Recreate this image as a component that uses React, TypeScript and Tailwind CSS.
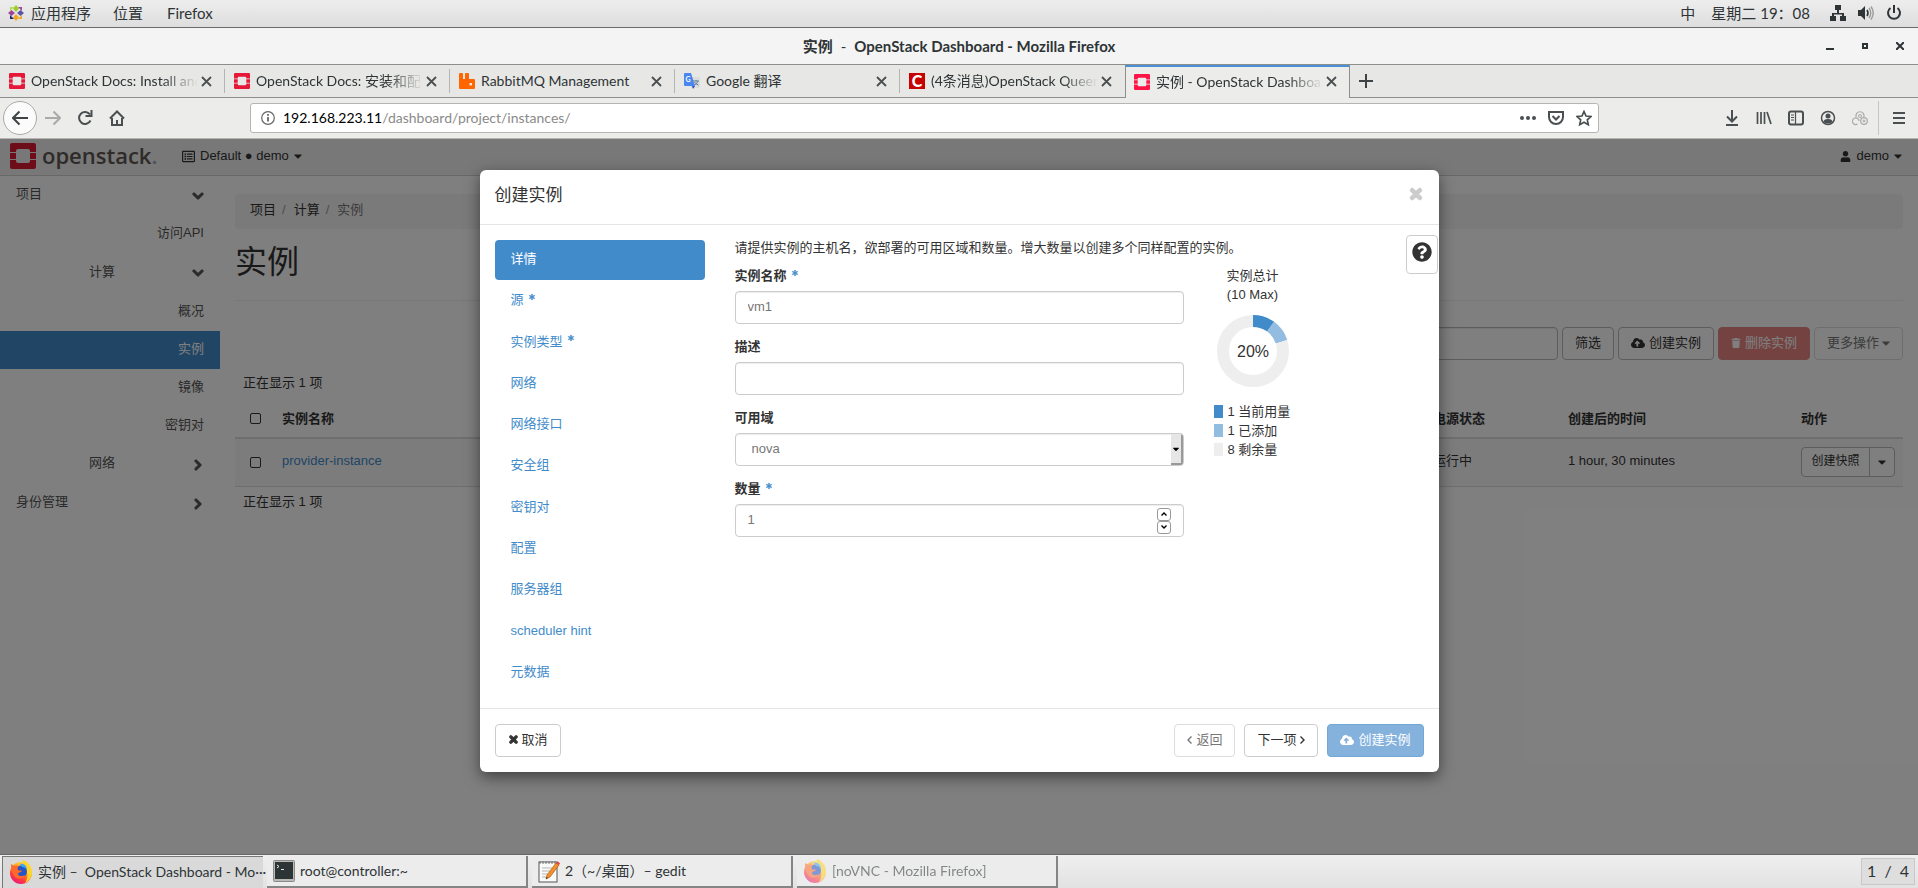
import React from 'react'
import {
    FaAsterisk,
    FaCaretDown,
    FaChevronDown,
    FaChevronRight,
    FaCloudUploadAlt,
    FaQuestionCircle,
    FaRegListAlt,
    FaTimes,
    FaTrash,
    FaUser,
} from 'react-icons/fa'

const WEB_FONT = "font-['Liberation_Sans','Noto_Sans_CJK_SC',sans-serif]"
const SHELL_FONT = "font-['Lato','Noto_Sans_CJK_SC',sans-serif]"

/* ---------- Logos ---------- */

function OpenStackMark({ className }: { className?: string }) {
    return (
        <svg viewBox="0 0 26 26" className={className} fill="currentColor" aria-hidden="true">
            <path d="M0 9V2a2 2 0 0 1 2-2h22a2 2 0 0 1 2 2v7h-6V8a2 2 0 0 0-2-2H8a2 2 0 0 0-2 2v1z" />
            <path d="M0 17v7a2 2 0 0 0 2 2h22a2 2 0 0 0 2-2v-7h-6v1a2 2 0 0 1-2 2H8a2 2 0 0 1-2-2v-1z" />
            <path d="M0 10h6v6H0zM20 10h6v6h-6z" />
        </svg>
    )
}

function RabbitMark() {
    return (
        <svg viewBox="0 0 16 16" className="size-4" aria-hidden="true">
            <path
                d="M0 1a1 1 0 0 1 1-1h2a1 1 0 0 1 1 1v5h2V1a1 1 0 0 1 1-1h2a1 1 0 0 1 1 1v5h5a1 1 0 0 1 1 1v8a1 1 0 0 1-1 1H1a1 1 0 0 1-1-1zM10.500 10v2.500h2.500V10z"
                fill="#ff6600"
                fillRule="evenodd"
            />
        </svg>
    )
}

function CentosMark() {
    return (
        <svg viewBox="0 0 16 16" className="size-4 shrink-0" aria-hidden="true">
            <path d="M8 0l3 3.500L8 7 5 3.500z" fill="#9ccd2a" />
            <path d="M16 8l-3.500 3L9 8l3.500-3z" fill="#5b57a6" />
            <path d="M8 16l-3-3.500L8 9l3 3.500z" fill="#efa724" />
            <path d="M0 8l3.500-3L7 8l-3.500 3z" fill="#a2459a" />
            <path d="M2 2h4L2 6z" fill="#b9d94f" />
            <path d="M14 2v4l-4-4z" fill="#a2459a" />
            <path d="M14 14h-4l4-4z" fill="#efa724" />
            <path d="M2 14v-4l4 4z" fill="#262577" />
        </svg>
    )
}

function TranslateMark() {
    return (
        <svg viewBox="0 0 16 16" className="size-4" aria-hidden="true">
            <rect x="7" y="4" width="9" height="11" rx="1" fill="#dcdcdc" />
            <path d="M9 8h6M12 7v1M14 8q-1 3-4 4M10.500 9q1 2 4 3" stroke="#5f7f8c" fill="none" />
            <path d="M1 0h6l4 13H1a1 1 0 0 1-1-1V1a1 1 0 0 1 1-1z" fill="#4a86f0" />
            <path d="M8 13h3l-2 3z" fill="#2f51b8" />
            <text x="1.500" y="9" fontSize="7" fontWeight="700" fill="#fff">G</text>
        </svg>
    )
}

function CsdnMark() {
    return <span className="grid size-4 place-items-center bg-[#c90000] text-base leading-4 font-black text-white">C</span>
}

function FirefoxMark({ className }: { className?: string }) {
    return (
        <svg viewBox="0 0 24 24" className={className} aria-hidden="true">
            <defs>
                <linearGradient id="fxBody" x1="0.8" y1="0" x2="0.2" y2="1">
                    <stop offset="0" stopColor="#fff14a" />
                    <stop offset="0.4" stopColor="#ff9a1f" />
                    <stop offset="0.7" stopColor="#ff3a3f" />
                    <stop offset="1" stopColor="#e31587" />
                </linearGradient>
            </defs>
            <circle cx="12" cy="13" r="11" fill="url(#fxBody)" />
            <path d="M14 0c4 1 9 6 9 12 0 5-3 9-7 11 4-6 3-12-1-15-2-2-2-5-1-8z" fill="#ffd52e" />
            <circle cx="12" cy="11.500" r="6" fill="#2456c8" />
            <path d="M11 4c4-1 7 2 7 6-1-2-3-3-5-3z" fill="#3fa5f5" />
            <path d="M2 4c2 1 3 2 4 2 2-1 3 0 4 0-1 1-2 2-1 4 1 1 3 0 4 1-1 2-4 1-4 3s4 3 7 1c-1 4-7 5-10 2C3 14 2 9 2 4z" fill="#ff6a2a" />
        </svg>
    )
}

function TerminalMark() {
    return (
        <svg viewBox="0 0 22 22" className="size-[22px] shrink-0" aria-hidden="true">
            <rect x="0.500" y="0.500" width="21" height="21" rx="1" fill="#b9bab6" stroke="#8a8a8a" />
            <rect x="2" y="2" width="18" height="17" fill="#2c3436" />
            <path d="M4 5l2 1.500L4 8M8 9.500h3" stroke="#e8e8e8" fill="none" />
        </svg>
    )
}

function GeditMark() {
    return (
        <svg viewBox="0 0 22 24" className="h-6 w-[22px] shrink-0" aria-hidden="true">
            <rect x="1" y="3" width="18" height="20" fill="#fafafa" stroke="#555" />
            <path d="M2 2v3M5 2v3M8 2v3M11 2v3M14 2v3M17 2v3" stroke="#777" />
            <path d="M4 9h10M4 12h8M4 15h6M4 18h4" stroke="#b5b5b5" />
            <path d="M18 4l3 2-9 12-4 2 1-4z" fill="#f58f28" stroke="#a85b16" strokeWidth="0.700" />
            <path d="M18 4l1-1.500q2 0 3 2L21 6z" fill="#e0474c" />
            <path d="M8 20l.5-2 1.500 1z" fill="#333" />
        </svg>
    )
}

/* ---------- Desktop shell ---------- */

function TopBar() {
    return (
        <header className="flex h-7 items-center border-b border-[#6a6a6a] bg-linear-to-b from-[#ededed] to-[#dedede] pr-4 pb-[2px] pl-2 text-[15px] leading-5 text-[#2e3436]">
            <CentosMark />
            <button className="ml-[7px]">应用程序</button>
            <button className="ml-[22px]">位置</button>
            <button className="ml-6">Firefox</button>
            <span className="ml-auto">中</span>
            <span className="ml-4">星期二 19：08</span>
            <div className="ml-5 flex items-center gap-3">
                <svg viewBox="0 0 16 16" className="size-4" fill="currentColor" aria-hidden="true">
                    <path d="M5 0h6v5H9v3h5v3h2v5h-6v-5h2V9.500H4V11h2v5H0v-5h2V8h5V5H5z" />
                </svg>
                <svg viewBox="0 0 16 16" className="size-4" fill="none" stroke="currentColor" aria-hidden="true">
                    <path d="M0 5h3l4-4v14l-4-4H0z" fill="currentColor" stroke="none" />
                    <path d="M9 5q2 3 0 6" strokeWidth="1.600" />
                    <path d="M11 3q3.500 5 0 10M13 1.500q4.500 6.500 0 13" stroke="#9a9c9c" strokeWidth="1.400" />
                </svg>
                <svg viewBox="0 0 16 16" className="size-4" fill="none" stroke="currentColor" strokeWidth="2" aria-hidden="true">
                    <path d="M4.500 3a6 6 0 1 0 7 0M8 0v8" />
                </svg>
            </div>
        </header>
    )
}

function TitleBar() {
    return (
        <div className="grid h-[37px] grid-cols-[1fr_auto_1fr] items-center border-b border-[#8e8f8b] bg-[#f4f4f4] pb-px text-[#2e3436]">
            <span />
            <h1 className="text-[15px] leading-5 font-bold">
                实例
                <span className="mx-2 font-normal">-</span>
                OpenStack Dashboard - Mozilla Firefox
            </h1>
            <div className="flex items-center justify-end gap-[27px] pr-[14px]">
                <button aria-label="最小化">
                    <svg viewBox="0 0 8 8" className="size-2" aria-hidden="true"><path d="M0 7h8" stroke="currentColor" strokeWidth="2" /></svg>
                </button>
                <button aria-label="最大化">
                    <svg viewBox="0 0 8 8" className="size-2" aria-hidden="true"><path d="M2 2h4v4H2z" fill="none" stroke="currentColor" strokeWidth="2" /></svg>
                </button>
                <button aria-label="关闭">
                    <svg viewBox="0 0 8 8" className="size-2" aria-hidden="true"><path d="M0 0l8 8M8 0L0 8" stroke="currentColor" strokeWidth="2" /></svg>
                </button>
            </div>
        </div>
    )
}

const tabs = [
    { title: 'OpenStack Docs: Install and', icon: <OpenStackMark className="size-4 text-[#e61739]" /> },
    { title: 'OpenStack Docs: 安装和配', icon: <OpenStackMark className="size-4 text-[#e61739]" /> },
    { title: 'RabbitMQ Management', icon: <RabbitMark /> },
    { title: 'Google 翻译', icon: <TranslateMark /> },
    { title: '(4条消息)OpenStack Queen', icon: <CsdnMark /> },
    { title: '实例 - OpenStack Dashboard', icon: <OpenStackMark className="size-4 text-[#ff1447]" />, active: true },
]

function TabStrip() {
    return (
        <div className="flex h-[33px] bg-[#e7e7e5] text-sm leading-5 text-[#2e3436]">
            {tabs.map((tab, i) => (
                <div
                    key={i}
                    className={
                        tab.active
                            ? 'flex w-[225px] items-center border-x border-t-2 border-x-[#8e8f8b] border-t-[#4a90d9] bg-[#ececea] pb-[2px] pl-2'
                            : 'flex w-[225px] items-center border-b border-[#8e8f8b] pl-[9px]'
                    }
                >
                    <span className="shrink-0">{tab.icon}</span>
                    <span className={`ml-[6px] w-[167px] overflow-hidden whitespace-nowrap ${i === 2 || i === 3 ? '' : '[mask-image:linear-gradient(to_right,black_calc(100%-36px),transparent)]'}`}>
                        {tab.title}
                    </span>
                    <button aria-label="关闭标签页" className="ml-[3px]">
                        <svg viewBox="0 0 11 11" className="size-[11px]" aria-hidden="true"><path d="M1 1l9 9M10 1l-9 9" stroke="#4a4f51" strokeWidth="1.800" /></svg>
                    </button>
                    {!tab.active && i !== 4 && <span className="ml-auto h-6 w-px bg-[#b4b4b2]" />}
                </div>
            ))}
            <div className="flex flex-1 items-center border-b border-[#8e8f8b] pl-[9px]">
                <button aria-label="新建标签页">
                    <svg viewBox="0 0 14 14" className="size-[14px]" aria-hidden="true"><path d="M7 0v14M0 7h14" stroke="#3e4446" strokeWidth="2" /></svg>
                </button>
            </div>
        </div>
    )
}

function NavIcon({ label, children, muted }: { label: string, children: React.ReactNode, muted?: boolean }) {
    return (
        <button aria-label={label} className={muted ? 'text-[#a9aaa9]' : 'text-[#4a4f51]'}>
            <svg viewBox="0 0 16 16" className="size-4" fill="none" stroke="currentColor" strokeWidth="2" aria-hidden="true">
                {children}
            </svg>
        </button>
    )
}

function Toolbar() {
    return (
        <div className="flex h-[41px] items-center border-b border-[#b4b4b0] bg-[#ececea] pr-[11px] pl-[3px]">
            <button aria-label="后退" className="grid size-[34px] place-items-center rounded-full border border-[#a9a9a7] bg-[#fbfbfb] text-[#3e4446]">
                <svg viewBox="0 0 16 16" className="size-4" fill="none" stroke="currentColor" strokeWidth="2" aria-hidden="true">
                    <path d="M16 8H1M7.500 1.500L1 8l6.500 6.500" />
                </svg>
            </button>
            <div className="ml-2 flex items-center gap-4">
                <NavIcon label="前进" muted><path d="M0 8h15M8.500 1.500L15 8l-6.500 6.500" /></NavIcon>
                <NavIcon label="刷新"><path d="M13.500 10.500a6 6 0 1 1-.500-6M14.500 0v6H8.500" /></NavIcon>
                <NavIcon label="主页"><path d="M1 8.500L8 1.500l7 7M3 8v7h10V8M8 15v-5" /></NavIcon>
            </div>
            <div className="ml-[125px] flex h-[30px] flex-1 items-center rounded-[3px] border border-[#b6b6b0] bg-white pr-[6px] pl-[10px] text-sm">
                <svg viewBox="0 0 14 14" className="size-[14px]" fill="none" stroke="#666" aria-hidden="true">
                    <circle cx="7" cy="7" r="6.300" strokeWidth="1.200" />
                    <path d="M7 6v4.500M7 3v1.700" strokeWidth="1.800" />
                </svg>
                <p className="ml-2 flex-1 text-[#8a8a8a]">
                    <span className="text-black">192.168.223.11</span>/dashboard/project/instances/
                </p>
                <div className="flex items-center gap-3">
                    <NavIcon label="页面操作">
                        <g fill="currentColor" stroke="none"><circle cx="2" cy="8" r="2" /><circle cx="8" cy="8" r="2" /><circle cx="14" cy="8" r="2" /></g>
                    </NavIcon>
                    <NavIcon label="保存到 Pocket"><path d="M1 2h14v5a7 7 0 0 1-14 0zM4.500 6L8 9.500 11.500 6" /></NavIcon>
                    <NavIcon label="收藏"><path d="M8 1.500l2 4.500 5 .5-3.700 3.300 1 4.900L8 12.200l-4.300 2.500 1-4.900L1 6.500 6 6z" strokeWidth="1.700" /></NavIcon>
                </div>
            </div>
            <div className="ml-[125px] flex items-center gap-4">
                <NavIcon label="下载"><path d="M8 0v11M3 6.500l5 5 5-5M2 15h12" /></NavIcon>
                <NavIcon label="书库"><path d="M1.500 2v12M5 2v12M8.500 2v12M11 2l4 12" strokeWidth="1.700" /></NavIcon>
                <NavIcon label="侧栏"><rect x="1" y="1.500" width="14" height="13" rx="2" /><path d="M7.500 2v12" strokeWidth="1.200" /><path d="M3 5h3M3 7.500h3M3 10h3" strokeWidth="1" /></NavIcon>
                <NavIcon label="账户"><circle cx="8" cy="8" r="6.500" strokeWidth="1.500" /><circle cx="8" cy="6" r="2.500" fill="currentColor" stroke="none" /><path d="M3.500 12q0-3 4.500-3t4.500 3q-4.500 3-9 0z" fill="currentColor" stroke="none" /></NavIcon>
                <NavIcon label="同步" muted>
                    <circle cx="8" cy="6" r="1.500" strokeWidth="1" />
                    <path d="M4.200 7a4 4 0 1 1 7.600 0M5.500 14a3.300 3.300 0 1 1 1.500-3" strokeWidth="1.200" />
                    <circle cx="12" cy="11" r="3.300" strokeWidth="1.200" />
                    <circle cx="12" cy="11" r="1" strokeWidth="1" />
                </NavIcon>
            </div>
            <span className="ml-[10px] h-[34px] w-px bg-[#c6c6c4]" />
            <div className="ml-3 flex">
                <NavIcon label="菜单"><path d="M2 3h12M2 8h12M2 13h12" /></NavIcon>
            </div>
        </div>
    )
}

const tasks = [
    { title: '实例 –  OpenStack Dashboard - Mo···', icon: <FirefoxMark className="size-6 shrink-0" />, state: 'active' },
    { title: 'root@controller:~', icon: <TerminalMark />, state: 'open' },
    { title: '2（~/桌面）– gedit', icon: <GeditMark />, state: 'open' },
    { title: '[noVNC - Mozilla Firefox]', icon: <FirefoxMark className="size-6 shrink-0" />, state: 'minimized' },
]

const taskStyles: Record<string, string> = {
    active: 'border-t border-l border-[#777] bg-[#d9d9d9]',
    open: 'border-r-2 border-b-2 border-[#858585] bg-[#ececec]',
    minimized: 'border-r-2 border-b-2 border-[#858585] bg-[#ececec] *:opacity-55',
}

function TaskBar() {
    return (
        <footer className="flex h-[34px] items-center gap-1 border-t border-[#666] bg-linear-to-b from-[#efefef] to-[#e2e2e2] pr-[3px] pl-[2px] text-sm leading-5 text-[#2e3436]">
            {tasks.map((task, i) => (
                <button key={i} className={`flex h-8 w-[261px] items-center gap-[5px] pl-[6px] whitespace-pre ${taskStyles[task.state]}`}>
                    {task.icon}
                    <span>{task.title}</span>
                </button>
            ))}
            <span className="ml-auto h-[27px] w-[54px] border border-[#c8c8c8] bg-[#dedede] text-center text-base leading-6 whitespace-pre">1  /  4</span>
        </footer>
    )
}

/* ---------- Horizon dashboard ---------- */

function Caret() {
    return <FaCaretDown className="h-3 w-2" preserveAspectRatio="xMidYMid slice" />
}

function Brand() {
    return (
        <nav className="flex h-[37px] items-center border-b border-[#d0d0d0] bg-[#f0f0f0] pr-4 pb-[2px] pl-[10px] text-[13px] text-[#333]">
            <a href="#" className="flex items-center gap-[6px]">
                <OpenStackMark className="size-[26px] text-[#da1a32]" />
                <span className="w-[113px] pb-[3px] font-['Open_Sans',sans-serif] text-[22px] leading-6 font-semibold text-[#5c5653]">
                    openstack<span className="text-[#a5a5a5]">.</span>
                </span>
            </a>
            <button className="ml-[27px] flex items-center gap-[5px]">
                <FaRegListAlt className="size-[13px]" />
                <span>Default ● demo</span>
                <Caret />
            </button>
            <button className="ml-auto flex items-center gap-[5px]">
                <FaUser className="size-[11px]" />
                <span>demo</span>
                <Caret />
            </button>
        </nav>
    )
}

function SideGroup({ label, open, nested }: { label: string, open?: boolean, nested?: boolean }) {
    return (
        <button className={`flex w-full items-center justify-between pr-4 ${nested ? 'pl-[89px]' : 'pl-4'} ${nested && open ? 'h-10' : 'h-[39px]'}`}>
            <span className="pb-[3px]">{label}</span>
            {open
                ? <FaChevronDown className="size-3 overflow-visible" strokeWidth={50} />
                : <FaChevronRight className="size-3 overflow-visible" strokeWidth={50} />}
        </button>
    )
}

function SideLink({ label, active }: { label: string, active?: boolean }) {
    return (
        <a
            href="#"
            className={`flex h-[38px] items-center justify-end pr-4 pb-[2px] ${active ? 'bg-[#428bca] text-white' : ''}`}
        >
            {label}
        </a>
    )
}

function Sidebar() {
    return (
        <aside className="w-[220px] shrink-0 text-[13px] leading-5 text-[#555]">
            <SideGroup label="项目" open />
            <SideLink label="访问API" />
            <SideGroup label="计算" open nested />
            <SideLink label="概况" />
            <SideLink label="实例" active />
            <SideLink label="镜像" />
            <SideLink label="密钥对" />
            <SideGroup label="网络" nested />
            <SideGroup label="身份管理" />
        </aside>
    )
}

function InstancesPage() {
    return (
        <main className="min-w-0 flex-1 px-[15px] pt-[18px] text-[13px] leading-5 text-[#333]">
            <ol className="flex h-[35px] items-center rounded bg-[#f5f5f5] px-[15px] pb-1">
                <li><a href="#">项目</a></li>
                <li className="pr-2 pl-[6px] text-[#999]">/</li>
                <li><a href="#">计算</a></li>
                <li className="pr-2 pl-[6px] text-[#999]">/</li>
                <li className="text-[#777]">实例</li>
            </ol>
            <h1 className="border-b border-[#eee] pt-[10px] pb-[15px] text-[32px] leading-[46px]">实例</h1>
            <div className="mt-[26px] flex h-[33px] justify-end gap-1">
                <input aria-label="筛选条件" className="w-[360px] rounded border border-[#bbb] bg-white px-3 shadow-[inset_0_1px_1px_rgba(0,0,0,0.075)]" />
                <button className="rounded border border-[#bbb] bg-white px-3 pb-[2px]">筛选</button>
                <button className="flex items-center gap-1 rounded border border-[#bbb] bg-white px-3 pb-[2px]"><FaCloudUploadAlt className="size-[14px]" />创建实例</button>
                <button className="flex items-center gap-1 rounded border border-[#e08a87] bg-[#e88783] px-3 pb-[2px] text-white"><FaTrash className="size-[10px]" />删除实例</button>
                <button className="flex items-center gap-[3px] rounded border border-[#ddd] bg-white px-3 pb-[2px] text-[#777]">更多操作<Caret /></button>
            </div>
            <p className="mt-[13px] px-2">正在显示 1 项</p>
            <table className="mt-[7px] w-full table-fixed text-left">
                <colgroup>
                    <col className="w-[39px]" />
                    <col />
                    <col className="w-[135px]" />
                    <col className="w-[233px]" />
                    <col className="w-[110px]" />
                </colgroup>
                <thead>
                    <tr className="h-[38px] border-b-2 border-[#ddd]">
                        <th className="pl-[15px]"><input type="checkbox" aria-label="全选" className="block size-[11px] appearance-none rounded-[2px] border border-[#333]" /></th>
                        <th className="px-2">实例名称</th>
                        <th className="px-2">电源状态</th>
                        <th className="px-2">创建后的时间</th>
                        <th className="px-2">动作</th>
                    </tr>
                </thead>
                <tbody>
                    <tr className="h-12 border-b border-[#ddd] bg-[#f9f9f9]">
                        <td className="pl-[15px]"><input type="checkbox" aria-label="选择 provider-instance" className="block size-[11px] appearance-none rounded-[2px] border border-[#333]" /></td>
                        <td className="px-2 pb-[2px]"><a href="#" className="text-[#428bca]">provider-instance</a></td>
                        <td className="px-2 pb-[2px]">运行中</td>
                        <td className="px-2 pb-[2px]">1 hour, 30 minutes</td>
                        <td className="px-2">
                            <div className="flex h-[30px] rounded border border-[#bbb] bg-white text-xs">
                                <button className="flex-1 pb-[2px]">创建快照</button>
                                <button aria-label="更多动作" className="grid w-[25px] place-items-center border-l border-[#bbb]"><Caret /></button>
                            </div>
                        </td>
                    </tr>
                </tbody>
            </table>
            <p className="mt-[5px] px-2">正在显示 1 项</p>
        </main>
    )
}

/* ---------- Launch instance dialog ---------- */

const steps = [
    { label: '详情', active: true },
    { label: '源', required: true },
    { label: '实例类型', required: true },
    { label: '网络' },
    { label: '网络接口' },
    { label: '安全组' },
    { label: '密钥对' },
    { label: '配置' },
    { label: '服务器组' },
    { label: 'scheduler hint' },
    { label: '元数据' },
]

const quota = [
    { value: 1, label: '当前用量', swatch: 'bg-[#428bca]', stroke: '#428bca' },
    { value: 1, label: '已添加', swatch: 'bg-[#92bce0]', stroke: '#92bce0' },
    { value: 8, label: '剩余量', swatch: 'bg-[#eeeeee]', stroke: '#eeeeee' },
]

function Required() {
    return <FaAsterisk className="mb-2 ml-[5px] inline size-[6px] overflow-visible text-[#428bca]" strokeWidth={40} />
}

function Field({ id, label, required, children }: { id: string, label: string, required?: boolean, children: React.ReactNode }) {
    return (
        <div className="mb-[13px]">
            <label htmlFor={id} className="mb-[6px] block h-[19px] leading-[19px] font-bold">
                {label}
                {required && <Required />}
            </label>
            {children}
        </div>
    )
}

function QuotaChart() {
    const total = quota.reduce((sum, q) => sum + q.value, 0)
    let offset = 0
    return (
        <svg viewBox="0 0 72 72" className="mx-auto mt-[11px] size-[72px]" role="img" aria-label="20%">
            <g transform="rotate(-90 36 36)" fill="none" strokeWidth="12">
                {quota.map((q) => {
                    const start = offset
                    offset += (q.value / total) * 100
                    return (
                        <circle
                            key={q.label}
                            cx="36"
                            cy="36"
                            r="30"
                            pathLength={100}
                            stroke={q.stroke}
                            strokeDasharray={`${(q.value / total) * 100} 100`}
                            strokeDashoffset={-start}
                        />
                    )
                })}
            </g>
            <text x="36" y="42" textAnchor="middle" fontSize="16" fill="#333">20%</text>
        </svg>
    )
}

function LaunchDialog() {
    const control = 'h-[33px] w-full rounded border border-[#ccc] bg-white text-[13px] text-[#777] shadow-[inset_0_1px_1px_rgba(0,0,0,0.075)]'

    return (
        <div role="dialog" aria-label="创建实例" className="mt-[31px] w-1/2 min-w-[800px] self-start rounded-md bg-white text-[13px] leading-5 text-[#333] shadow-[0_5px_15px_rgba(0,0,0,0.5)]">
            <div className="flex h-[55px] items-start justify-between border-b border-[#e5e5e5] px-[15px] pt-[14px]">
                <h2 className="text-[17px] leading-6">创建实例</h2>
                <button aria-label="关闭" className="mt-[2px] text-[#ccc]"><FaTimes className="size-4 overflow-visible" strokeWidth={50} /></button>
            </div>

            <div className="flex items-start pt-[10px] pr-px pb-[15px] pl-[15px]">
                <ul className="mt-[5px] flex h-[453px] w-[210px] shrink-0 flex-col justify-between">
                    {steps.map((step) => (
                        <li key={step.label}>
                            <a
                                href="#"
                                className={`block h-10 rounded px-4 pt-[9px] ${step.active ? 'bg-[#428bca] text-white' : 'text-[#428bca]'}`}
                            >
                                {step.label}
                                {step.required && <Required />}
                            </a>
                        </li>
                    ))}
                </ul>

                <div className="ml-[30px] min-w-0 flex-1">
                    <p className="mt-[3px] leading-5">请提供实例的主机名，欲部署的可用区域和数量。增大数量以创建多个同样配置的实例。</p>
                    <div className="mt-[8px] flex gap-[30px]">
                        <div className="min-w-0 flex-1">
                            <Field id="name" label="实例名称" required>
                                <input id="name" defaultValue="vm1" className={`${control} px-3 pb-[2px]`} />
                            </Field>
                            <Field id="description" label="描述">
                                <input id="description" className={`${control} px-3`} />
                            </Field>
                            <Field id="zone" label="可用域">
                                <div className={`${control} flex overflow-hidden`}>
                                    <select id="zone" className="flex-1 appearance-none pb-[2px] pl-4">
                                        <option>nova</option>
                                    </select>
                                    <span className="grid w-3 place-items-center border-r-2 border-b-2 border-[#999] bg-[#e6e6e6] text-black">
                                        <FaCaretDown className="size-[10px]" />
                                    </span>
                                </div>
                            </Field>
                            <Field id="count" label="数量" required>
                                <div className={`${control} flex items-center px-3`}>
                                    <input id="count" type="number" defaultValue={1} className="min-w-0 flex-1 [appearance:textfield] pb-[2px] [&::-webkit-inner-spin-button]:appearance-none" />
                                    <div className="flex flex-col text-black">
                                        <button aria-label="增加" className="grid h-[13px] w-[14px] place-items-center rounded-[3px] border border-[#999]">
                                            <svg viewBox="0 0 6 4" className="h-1 w-[6px]" aria-hidden="true"><path d="M0.500 3.500L3 1l2.500 2.500" fill="none" stroke="currentColor" strokeWidth="1.400" /></svg>
                                        </button>
                                        <button aria-label="减少" className="grid h-[13px] w-[14px] place-items-center rounded-[3px] border border-[#999]">
                                            <svg viewBox="0 0 6 4" className="h-1 w-[6px]" aria-hidden="true"><path d="M0.500 0.500L3 3l2.500-2.500" fill="none" stroke="currentColor" strokeWidth="1.400" /></svg>
                                        </button>
                                    </div>
                                </div>
                            </Field>
                        </div>

                        <div className="w-[192px]">
                            <div className="w-[78px] text-center">
                                <p className="leading-[19px]">实例总计</p>
                                <p className="leading-[19px]">(10 Max)</p>
                                <QuotaChart />
                            </div>
                            <ul className="mt-[15px]">
                                {quota.map((q) => (
                                    <li key={q.label} className="flex items-center gap-[5px] leading-[19px]">
                                        <span className={`h-[13px] w-[9px] ${q.swatch}`} />
                                        {q.value} {q.label}
                                    </li>
                                ))}
                            </ul>
                        </div>
                    </div>
                </div>

                <button aria-label="帮助" className="flex h-[39px] w-8 shrink-0 justify-center rounded border border-[#ccc] bg-white pt-[6px]">
                    <FaQuestionCircle className="size-5" />
                </button>
            </div>

            <div className="flex h-16 items-center gap-[9px] border-t border-[#e5e5e5] px-[15px]">
                <button className="mr-auto flex h-[33px] items-center gap-[3px] rounded border border-[#ccc] px-3 pb-[2px]"><FaTimes className="size-[11px] overflow-visible" strokeWidth={60} />取消</button>
                <button disabled className="flex h-[33px] items-center gap-1 rounded border border-[#ddd] px-3 pb-[2px] text-[#777]">
                    <svg viewBox="0 0 5 8" className="h-2 w-[5px]" aria-hidden="true"><path d="M4.500 0.500L1 4l3.500 3.500" fill="none" stroke="currentColor" strokeWidth="1.400" /></svg>
                    返回
                </button>
                <button className="flex h-[33px] items-center gap-1 rounded border border-[#ccc] px-3 pb-[2px]">
                    下一项
                    <svg viewBox="0 0 5 8" className="h-2 w-[5px]" aria-hidden="true"><path d="M0.500 0.500L4 4 0.500 7.500" fill="none" stroke="currentColor" strokeWidth="1.400" /></svg>
                </button>
                <button disabled className="flex h-[33px] items-center gap-1 rounded border border-[#72a7d6] bg-[#85b2dd] px-3 pb-[2px] text-white"><FaCloudUploadAlt className="size-[14px]" />创建实例</button>
            </div>
        </div>
    )
}

export default function App() {
    return (
        <div className={`flex min-h-screen flex-col ${SHELL_FONT}`}>
            <TopBar />
            <TitleBar />
            <TabStrip />
            <Toolbar />
            <div className={`relative flex-1 bg-white ${WEB_FONT}`}>
                <Brand />
                <div className="flex">
                    <Sidebar />
                    <InstancesPage />
                </div>
                {/* Modal backdrop covers only the web page, not the browser chrome */}
                <div className="absolute inset-0 flex justify-center bg-black/50">
                    <LaunchDialog />
                </div>
            </div>
            <TaskBar />
        </div>
    )
}
